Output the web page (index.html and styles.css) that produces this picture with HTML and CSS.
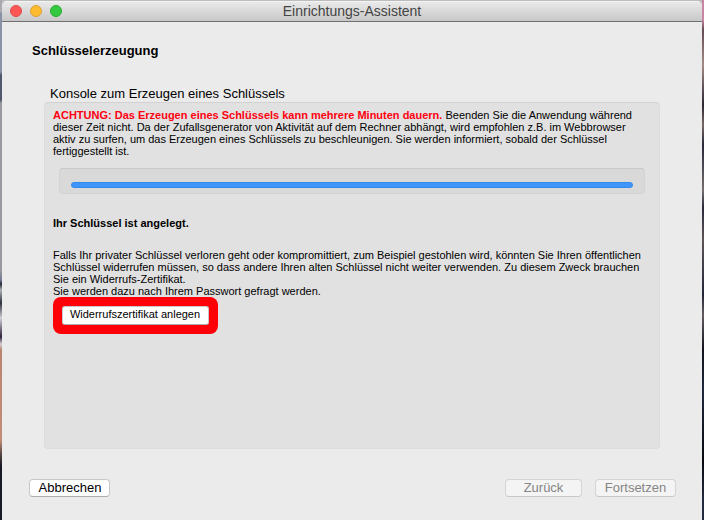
FILE: index.html
```html
<!DOCTYPE html>
<html lang="de">
<head>
<meta charset="utf-8">
<title>Einrichtungs-Assistent</title>
<link rel="stylesheet" href="styles.css">
</head>
<body>
<main class="window">
  <header class="titlebar">
    <div class="lights"><i class="light close"></i><i class="light minimize"></i><i class="light maximize"></i></div>
    <div class="title">Einrichtungs-Assistent</div>
  </header>
  <h1>Schlüsselerzeugung</h1>
  <h2>Konsole zum Erzeugen eines Schlüssels</h2>
  <section class="panel">
    <p class="copy warning"><strong>ACHTUNG: Das Erzeugen eines Schlüssels kann mehrere Minuten dauern.</strong> Beenden Sie die Anwendung während<br><span class="tight">dieser Zeit nicht. Da der Zufallsgenerator von Aktivität auf dem Rechner abhängt, wird empfohlen z.B. im Webbrowser</span><br><span class="tight">aktiv zu surfen, um das Erzeugen eines Schlüssels zu beschleunigen. Sie werden informiert, sobald der Schlüssel</span><br>fertiggestellt ist.</p>
    <div class="progress"><div class="bar"></div></div>
    <p class="copy done">Ihr Schlüssel ist angelegt.</p>
    <p class="copy info">Falls Ihr privater Schlüssel verloren geht oder kompromittiert, zum Beispiel gestohlen wird, könnten Sie Ihren öffentlichen<br>Schlüssel widerrufen müssen, so dass andere Ihren alten Schlüssel nicht weiter verwenden. Zu diesem Zweck brauchen<br>Sie ein Widerrufs-Zertifikat.<br>Sie werden dazu nach Ihrem Passwort gefragt werden.</p>
    <div class="highlight"><button class="create">Widerrufszertifikat anlegen</button></div>
  </section>
  <footer>
    <button class="cancel">Abbrechen</button>
    <button class="back" disabled>Zurück</button>
    <button class="next" disabled>Fortsetzen</button>
  </footer>
</main>
</body>
</html>
```

FILE: styles.css
```css
* { box-sizing: border-box; }
body {
  margin: 0;
  height: 520px;
  overflow: hidden;
  padding: 1px 2px 0;
  font-family: "Liberation Sans", sans-serif;
  color: #000;
  background:
    linear-gradient(#a9a9ae 0 12px, #8b91a5 13px 72px, #52586c 75px 100px, #989aa0 103px 270px, #737c94 280px, #252936 284px, #afb1b8 290px, #30333e 303px, #d0d0d5 318px, #32213c 337px, #d2d0d5 344px, #b98570 350px, #c28d76 440px, #51433f 455px, #171a26 466px) left / 2px 520px no-repeat,
    linear-gradient(#c985a2 0 20px, #654c56 30px, #a38b86 65px, #2c2735 105px, #796967 125px, #27283a 145px, #766e70 190px, #292b3d 208px, #5e5458 240px, #222638 295px, #655b61 315px, #11131c 350px, #20283d 390px, #080a10 460px, #232a3e 500px) right / 2px 520px no-repeat,
    #bcbcbc;
}
.window { height: 519px; background: #ebebeb; border-radius: 5px 5px 0 0; overflow: hidden; }
.titlebar {
  position: relative;
  display: flex;
  align-items: center;
  height: 21px;
  background: linear-gradient(#e9e9e9, #c8c8c8);
  border-top: 1px solid #f3f3f3;
  border-bottom: 1px solid #707070;
}
.lights { display: flex; gap: 8px; padding: 0 0 1px 8px; }
.light { width: 12px; height: 12px; border-radius: 50%; }
.close { background: #fc5753; border: 1px solid #dc4b48; }
.minimize { background: #fdbc30; border: 1px solid #dba033; }
.maximize { background: #34c941; border: 1px solid #28a832; }
.title { position: absolute; left: 0; right: 0; top: 1px; text-align: center; font-size: 14px; line-height: 17px; color: #444; }
h1 { margin: 21px 0 0 30px; font-size: 13px; line-height: 16px; }
h2 { margin: 27px 0 0 48px; font-size: 13px; line-height: 16px; font-weight: 400; }
.panel {
  width: 616px;
  height: 347px;
  margin: 0 0 0 42px;
  padding: 7px 8px 0;
  background: #e1e1e1;
  border: 1px solid #dcdcdc;
  border-top-color: #d2d2d2;
  border-radius: 4px;
}
.copy { margin: 0; font-size: 11px; line-height: 12px; white-space: nowrap; }
.warning { margin-top: -1px; }
.warning strong { color: #ff0010; }
.tight { letter-spacing: -0.006px; }
.progress { width: 586px; height: 26px; margin: 11px 0 0 6px; padding: 13px 11px 0; background: #d9d9d9; border: 1px solid #d3d3d3; border-top-color: #c9c9c9; border-radius: 4px; }
.bar { height: 6px; border-radius: 3px; background: #3e96fb; border: 1px solid #3589e8; }
.done { margin-top: 23px; font-weight: 700; }
.info { margin-top: 20px; }
.highlight { width: 165px; height: 37px; padding: 9px 9px 0; background: #ff0008; border-radius: 8px; }
button {
  display: flex;
  align-items: center;
  justify-content: center;
  padding: 0 0 2px;
  font-family: inherit;
  white-space: nowrap;
  color: #000;
  background: #fff;
  border: 1px solid #c8c8c8;
  border-bottom-color: #adadad;
  border-radius: 4px;
}
.create { width: 147px; height: 19px; padding: 0 1px 3px 0; font-size: 11px; border-radius: 3px; }
footer { display: flex; padding: 30px 26px 0 27px; }
footer button { height: 18px; font-size: 13px; }
.cancel { width: 81px; padding-left: 1px; }
.back { width: 77px; margin-left: auto; margin-right: 13px; }
.next { width: 81px; }
button:disabled { color: #858585; background: #f4f4f4; border-color: #d4d4d4; border-bottom-color: #c8c8c8; }
```
